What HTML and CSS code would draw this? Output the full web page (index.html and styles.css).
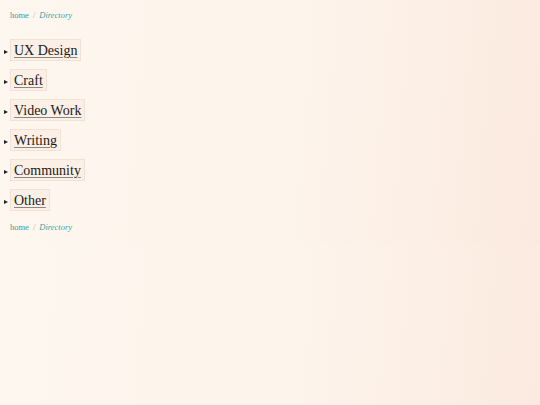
FILE: index.html
```html
<!DOCTYPE html>
<html lang="en">
<head>
<meta charset="utf-8">
<title>Directory</title>
<link rel="stylesheet" href="styles.css">
</head>
<body>
<nav class="crumbs"><a href="#">home</a><span class="sep">/</span><em>Directory</em></nav>
<ul class="dir">
  <li class="item"><span class="tri"></span><a class="box" href="#">UX Design</a></li>
  <li class="item"><span class="tri"></span><a class="box" href="#">Craft</a></li>
  <li class="item"><span class="tri"></span><a class="box" href="#">Video Work</a></li>
  <li class="item"><span class="tri"></span><a class="box" href="#">Writing</a></li>
  <li class="item"><span class="tri"></span><a class="box" href="#">Community</a></li>
  <li class="item"><span class="tri"></span><a class="box" href="#">Other</a></li>
</ul>
<nav class="crumbs"><a href="#">home</a><span class="sep">/</span><em>Directory</em></nav>
</body>
</html>
```
FILE: styles.css
```css
html, body { margin: 0; }
body {
  padding: 10px 0 12px 10px;
  font-family: "Liberation Serif", "DejaVu Serif", serif;
  background: linear-gradient(95deg, #fef7ef 0%, #fdf4eb 55%, #fbeadf 100%);
  color: #222;
}
.crumbs {
  font-size: 8.5px;
  line-height: 11px;
  color: #3a9c9c;
  display: flex;
  gap: 4px;
}
.crumbs a { color: #3f9a98; text-decoration: none; }
.crumbs .sep { color: #b9b3ad; }
.crumbs em { font-style: italic; color: #3aa3a8; }
.dir {
  list-style: none;
  margin: 18px 0 11px 0;
  padding: 0;
  display: flex;
  flex-direction: column;
  gap: 8px;
}
.item {
  display: flex;
  align-items: center;
  position: relative;
}
.tri {
  position: absolute;
  left: -6px;
  top: 11px;
  width: 0; height: 0;
  border-left: 4px solid #222;
  border-top: 2.5px solid transparent;
  border-bottom: 2.5px solid transparent;
}
.box {
  display: inline-block;
  height: 20px;
  line-height: 21px;
  padding: 0 3px;
  border: 1px solid #f4e1d5;
  background: #fcefe6;
  font-size: 14px;
  color: #1a1a1a;
  text-decoration: underline;
  text-decoration-color: #888;
  text-underline-offset: 2px;
}
```
